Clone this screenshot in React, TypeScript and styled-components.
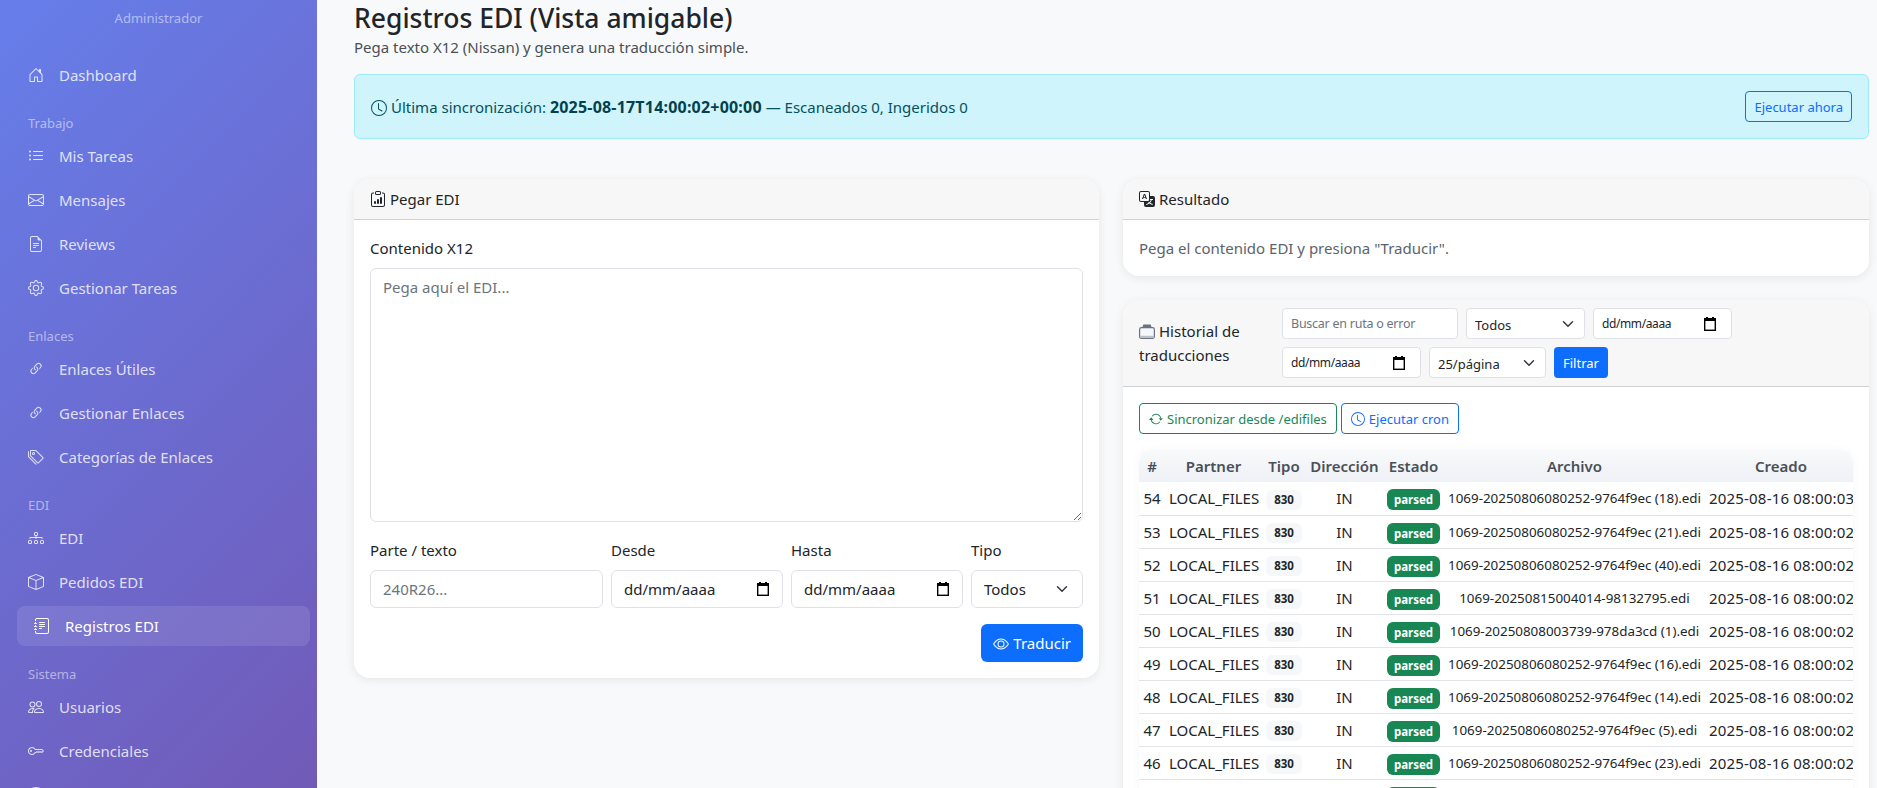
import React from 'react'
import styled, { createGlobalStyle } from 'styled-components'
import {
  BsHouseDoor,
  BsListUl,
  BsEnvelope,
  BsFileEarmarkText,
  BsGear,
  BsLink45Deg,
  BsTags,
  BsDiagram3,
  BsBox,
  BsJournalText,
  BsPeople,
  BsKey,
  BsShield,
  BsClock,
  BsClipboardData,
  BsTranslate,
  BsArrowRepeat,
  BsEye,
} from 'react-icons/bs'

const GlobalStyle = createGlobalStyle`
  html, body {
    margin: 0;
    height: 100%;
    overflow: hidden;
    background: #f8f9fa;
    color: #212529;
    font-family: "Noto Sans", "Open Sans", sans-serif;
    font-size: 15px;
    line-height: 24px;
  }
  * { box-sizing: border-box; }
`

const Layout = styled.div`
  display: flex;
  height: 788px;
  overflow: hidden;
  align-items: flex-start;
`

const Sidebar = styled.aside`
  flex: 0 0 317px;
  min-width: 0;
  min-height: 1250px;
  padding-top: 8px;
  background: linear-gradient(135deg, #667eea 0%, #764ba2 100%);
`

const Role = styled.div`
  margin-bottom: 26px;
  text-align: center;
  font-size: 13px;
  line-height: 21px;
  color: rgba(255, 255, 255, 0.5);
`

const NavList = styled.nav`
  padding: 0 7px 0 17px;
`

const SectionLabel = styled.div`
  margin: 18px 0 2px;
  padding-left: 11px;
  font-size: 13px;
  line-height: 21px;
  color: rgba(255, 255, 255, 0.5);
`

const NavItem = styled.a<{ $active?: boolean }>`
  display: flex;
  align-items: center;
  gap: 15px;
  height: 40px;
  margin-bottom: 4px;
  padding-bottom: 1px;
  padding-left: ${(p) => (p.$active ? '17px' : '11px')};
  border-radius: 8px;
  font-size: 15px;
  color: ${(p) => (p.$active ? '#fff' : 'rgba(255, 255, 255, 0.8)')};
  background: ${(p) => (p.$active ? 'rgba(255, 255, 255, 0.1)' : 'transparent')};
  svg {
    flex: none;
    width: 16px;
    height: 16px;
  }
`

const Main = styled.main`
  flex: 1;
  min-width: 0;
  padding: 1px 8px 0 37px;
`

const Title = styled.h3`
  margin: 0;
  font-size: 26.5px;
  line-height: 34px;
  font-weight: 500;
`

const Subtitle = styled.p`
  margin: 0 0 15px;
  color: #495057;
`

const Alert = styled.div`
  display: flex;
  align-items: center;
  justify-content: space-between;
  padding: 16px;
  border: 1px solid #9eeaf9;
  border-radius: 6px;
  background: #cff4fc;
  color: #055160;
  margin-bottom: 40px;
  svg {
    width: 16px;
    height: 16px;
    margin-right: 4px;
    vertical-align: -3px;
  }
  b {
    font-size: 16px;
    font-weight: 700;
    letter-spacing: 0.2px;
    color: #04414d;
  }
`

const Columns = styled.div`
  display: grid;
  grid-template-columns: 745px 746px;
  gap: 24px;
  align-items: start;
`

const Stack = styled.div`
  display: flex;
  flex-direction: column;
  gap: 24px;
`

const Card = styled.section`
  background: #fff;
  border-radius: 16px;
  box-shadow: 0 2px 10px rgba(0, 0, 0, 0.08);
`

const CardHeader = styled.header`
  padding: 8px 16px;
  background: #f7f7f8;
  border-bottom: 1px solid #d0d1d2;
  border-radius: 16px 16px 0 0;
  svg {
    width: 16px;
    height: 16px;
    margin-right: 4px;
    vertical-align: -2px;
  }
`

const HistoryHeader = styled(CardHeader)`
  display: flex;
  align-items: center;
`

const HistoryTitle = styled.div`
  flex: 0 0 143px;
`

const CardBody = styled.div`
  padding: 16px;
`

const Muted = styled.div`
  color: #5c636a;
`

const Label = styled.label`
  display: block;
  margin-bottom: 8px;
`

const Textarea = styled.textarea`
  display: block;
  width: 100%;
  height: 254px;
  margin-bottom: 16px;
  padding: 6px 12px;
  border: 1px solid #dee2e6;
  border-radius: 6px;
  font: inherit;
  color: #212529;
  &::placeholder { color: #6c757d; }
`

const FieldRow = styled.div`
  display: grid;
  grid-template-columns: 233fr 172fr 172fr 112fr;
  gap: 8px;
  margin-bottom: 16px;
`

const Input = styled.input<{ $width?: number }>`
  display: block;
  width: ${(p) => (p.$width ? `${p.$width}px` : '100%')};
  height: 38px;
  padding: 6px 12px;
  border: 1px solid #dee2e6;
  border-radius: 6px;
  background: #fff;
  font: inherit;
  color: #212529;
  &::placeholder { color: #6c757d; }
`

const SmallInput = styled(Input)`
  height: 31px;
  padding: 4px 8px;
  border-radius: 4px;
  font-size: 12.5px;
  letter-spacing: -0.25px;
`

const chevron =
  "url(\"data:image/svg+xml,%3csvg xmlns='http://www.w3.org/2000/svg' viewBox='0 0 16 16'%3e%3cpath fill='none' stroke='%23343a40' stroke-linecap='round' stroke-linejoin='round' stroke-width='2' d='m2 5 6 6 6-6'/%3e%3c/svg%3e\")"

const Select = styled.select<{ $width?: number }>`
  display: block;
  width: ${(p) => (p.$width ? `${p.$width}px` : '100%')};
  height: 38px;
  padding: 6px 36px 6px 12px;
  border: 1px solid #dee2e6;
  border-radius: 6px;
  appearance: none;
  background: #fff ${chevron} no-repeat right 12px center / 16px 12px;
  font: inherit;
  color: #212529;
`

const SmallSelect = styled(Select)`
  height: 31px;
  padding: 4px 28px 4px 8px;
  border-radius: 4px;
  font-size: 13px;
  background-position: right 8px center;
`

const DateBox = styled.div<{ $small?: boolean; $width?: number }>`
  display: flex;
  align-items: center;
  justify-content: space-between;
  width: ${(p) => (p.$width ? `${p.$width}px` : '100%')};
  height: ${(p) => (p.$small ? '31px' : '38px')};
  padding: ${(p) => (p.$small ? '0 9px 0 8px' : '0 12px')};
  border: 1px solid #dee2e6;
  border-radius: ${(p) => (p.$small ? '4px' : '6px')};
  background: #fff;
  font-size: ${(p) => (p.$small ? '12px' : '15px')};
  letter-spacing: ${(p) => (p.$small ? '-0.4px' : '0')};
`

const Actions = styled.div`
  display: flex;
  justify-content: flex-end;
`

const Primary = styled.button`
  height: 38px;
  padding: 0 12px;
  border: 0;
  border-radius: 6px;
  background: #0d6efd;
  color: #fff;
  font: inherit;
  svg {
    width: 16px;
    height: 16px;
    margin-right: 4px;
    vertical-align: -3px;
  }
`

const SmallPrimary = styled(Primary)`
  height: 31px;
  padding: 0 9px;
  border-radius: 4px;
  font-size: 13px;
`

const Outline = styled.button<{ $tone: string }>`
  height: 31px;
  padding: 0 8px;
  border: 1px solid ${(p) => p.$tone};
  border-radius: 4px;
  background: transparent;
  color: ${(p) => p.$tone};
  font: inherit;
  font-size: 13px;
  svg {
    width: 14px;
    height: 14px;
    margin-right: 4px;
    vertical-align: -2px;
  }
`

const ToolButton = styled(Outline)`
  padding: 0 9px;
`

const Filters = styled.div`
  display: flex;
  flex-wrap: wrap;
  gap: 8px;
  width: 455px;
`

const ToolRow = styled.div`
  display: flex;
  gap: 4px;
  margin-bottom: 16px;
`

const TableWrap = styled.div`
  overflow: hidden;
  border-radius: 12px 12px 0 0;
  box-shadow: 0 0 8px rgba(0, 0, 0, 0.04);
`

const Table = styled.table`
  width: 718px;
  table-layout: fixed;
  border-collapse: collapse;
  text-align: center;
  th {
    height: 32px;
    padding: 4px;
    font-weight: 600;
    color: #495057;
    background: linear-gradient(180deg, #f8f9fa 0%, #eef1f6 100%);
    white-space: nowrap;
  }
  td {
    height: 33px;
    padding: 0 4px;
    border-bottom: 1px solid #e3e4ea;
    white-space: nowrap;
  }
`

const FileCell = styled.td`
  font-size: 13.4px;
`

const DateCell = styled.td`
  letter-spacing: 0.19px;
`

const Pill = styled.span`
  display: inline-block;
  width: 36px;
  padding: 4px 0;
  border-radius: 6px;
  background: #f6f7f8;
  font-size: 11.5px;
  line-height: 12px;
  font-weight: 700;
  vertical-align: middle;
`

const StatusPill = styled(Pill)`
  width: 53px;
  height: 21px;
  padding: 5px 0 4px;
  background: #198754;
  color: #fff;
`

const CalendarIcon = () => (
  <svg width="14" height="16" viewBox="0 0 14 16" fill="none">
    <path d="M3 1h2v1h4V1h2v1h2v13H1V2h2z" fill="#000" />
    <rect x="2.4" y="5" width="9.2" height="8.6" fill="#fff" />
  </svg>
)

const HistoryIcon = () => (
  <svg viewBox="0 0 16 16" fill="none">
    <rect x="0.6" y="4.6" width="14.8" height="10.8" rx="1.8" fill="#f5f7fb" stroke="#6b7280" strokeWidth="1.2" />
    <path d="M3 5l1.4-3.4h7.2L13 5z" fill="#6b7280" />
    <rect x="1.2" y="12.8" width="13.6" height="2" fill="#b9bec7" />
  </svg>
)

const DateField = (props: { small?: boolean; width?: number }) => (
  <DateBox $small={props.small} $width={props.width}>
    dd/mm/aaaa
    <CalendarIcon />
  </DateBox>
)

const files: [number, string, string][] = [
  [54, '1069-20250806080252-9764f9ec (18).edi', '03'],
  [53, '1069-20250806080252-9764f9ec (21).edi', '02'],
  [52, '1069-20250806080252-9764f9ec (40).edi', '02'],
  [51, '1069-20250815004014-98132795.edi', '02'],
  [50, '1069-20250808003739-978da3cd (1).edi', '02'],
  [49, '1069-20250806080252-9764f9ec (16).edi', '02'],
  [48, '1069-20250806080252-9764f9ec (14).edi', '02'],
  [47, '1069-20250806080252-9764f9ec (5).edi', '02'],
  [46, '1069-20250806080252-9764f9ec (23).edi', '02'],
]

const nav = [
  { items: [['Dashboard', BsHouseDoor]] },
  {
    title: 'Trabajo',
    items: [
      ['Mis Tareas', BsListUl],
      ['Mensajes', BsEnvelope],
      ['Reviews', BsFileEarmarkText],
      ['Gestionar Tareas', BsGear],
    ],
  },
  {
    title: 'Enlaces',
    items: [
      ['Enlaces Útiles', BsLink45Deg],
      ['Gestionar Enlaces', BsLink45Deg],
      ['Categorías de Enlaces', BsTags],
    ],
  },
  {
    title: 'EDI',
    items: [
      ['EDI', BsDiagram3],
      ['Pedidos EDI', BsBox],
      ['Registros EDI', BsJournalText],
    ],
  },
  {
    title: 'Sistema',
    items: [
      ['Usuarios', BsPeople],
      ['Credenciales', BsKey],
      ['', BsShield],
    ],
  },
] as { title?: string; items: [string, React.ComponentType][] }[]

export default function App() {
  return (
    <Layout>
      <GlobalStyle />
      <Sidebar>
        <Role>Administrador</Role>
        <NavList>
          {nav.map((section, i) => (
            <div key={i}>
              {section.title && <SectionLabel>{section.title}</SectionLabel>}
              {section.items.map(([label, Icon]) => (
                <NavItem key={label} $active={label === 'Registros EDI'}>
                  <Icon />
                  {label}
                </NavItem>
              ))}
            </div>
          ))}
        </NavList>
      </Sidebar>

      <Main>
        <Title>Registros EDI (Vista amigable)</Title>
        <Subtitle>Pega texto X12 (Nissan) y genera una traducción simple.</Subtitle>

        <Alert>
          <div>
            <BsClock />
            Última sincronización: <b>2025-08-17T14:00:02+00:00</b> — Escaneados 0, Ingeridos 0
          </div>
          <Outline $tone="#0d6efd">Ejecutar ahora</Outline>
        </Alert>

        <Columns>
          <Card>
            <CardHeader>
              <BsClipboardData />
              Pegar EDI
            </CardHeader>
            <CardBody>
              <Label>Contenido X12</Label>
              <Textarea placeholder="Pega aquí el EDI..." />
              <FieldRow>
                <div>
                  <Label>Parte / texto</Label>
                  <Input placeholder="240R26..." />
                </div>
                <div>
                  <Label>Desde</Label>
                  <DateField />
                </div>
                <div>
                  <Label>Hasta</Label>
                  <DateField />
                </div>
                <div>
                  <Label>Tipo</Label>
                  <Select>
                    <option>Todos</option>
                  </Select>
                </div>
              </FieldRow>
              <Actions>
                <Primary>
                  <BsEye />
                  Traducir
                </Primary>
              </Actions>
            </CardBody>
          </Card>

          <Stack>
            <Card>
              <CardHeader>
                <BsTranslate />
                Resultado
              </CardHeader>
              <CardBody>
                <Muted>Pega el contenido EDI y presiona "Traducir".</Muted>
              </CardBody>
            </Card>

            <Card>
              <HistoryHeader>
                <HistoryTitle>
                  <HistoryIcon />
                  Historial de traducciones
                </HistoryTitle>
                <Filters>
                  <SmallInput $width={176} placeholder="Buscar en ruta o error" />
                  <SmallSelect $width={119}>
                    <option>Todos</option>
                  </SmallSelect>
                  <DateField small width={139} />
                  <DateField small width={139} />
                  <SmallSelect $width={117}>
                    <option>25/página</option>
                  </SmallSelect>
                  <SmallPrimary>Filtrar</SmallPrimary>
                </Filters>
              </HistoryHeader>
              <CardBody>
                <ToolRow>
                  <ToolButton $tone="#198754">
                    <BsArrowRepeat />
                    Sincronizar desde /edifiles
                  </ToolButton>
                  <ToolButton $tone="#0d6efd">
                    <BsClock />
                    Ejecutar cron
                  </ToolButton>
                </ToolRow>
                <TableWrap>
                  <Table>
                    <colgroup>
                      <col width={26} />
                      <col width={97} />
                      <col width={44} />
                      <col width={77} />
                      <col width={61} />
                      <col width={261} />
                      <col width={152} />
                    </colgroup>
                    <thead>
                      <tr>
                        <th>#</th>
                        <th>Partner</th>
                        <th>Tipo</th>
                        <th>Dirección</th>
                        <th>Estado</th>
                        <th>Archivo</th>
                        <th>Creado</th>
                      </tr>
                    </thead>
                    <tbody>
                      {files.map(([id, name, sec]) => (
                        <tr key={id}>
                          <td>{id}</td>
                          <td>LOCAL_FILES</td>
                          <td>
                            <Pill>830</Pill>
                          </td>
                          <td>IN</td>
                          <td>
                            <StatusPill>parsed</StatusPill>
                          </td>
                          <FileCell>{name}</FileCell>
                          <DateCell>2025-08-16 08:00:{sec}</DateCell>
                        </tr>
                      ))}
                      {/* next row only shows the top of its status badge in the window */}
                      <tr>
                        <td />
                        <td />
                        <td />
                        <td />
                        <td>
                          <StatusPill />
                        </td>
                        <td />
                        <td />
                      </tr>
                    </tbody>
                  </Table>
                </TableWrap>
              </CardBody>
            </Card>
          </Stack>
        </Columns>
      </Main>
    </Layout>
  )
}
